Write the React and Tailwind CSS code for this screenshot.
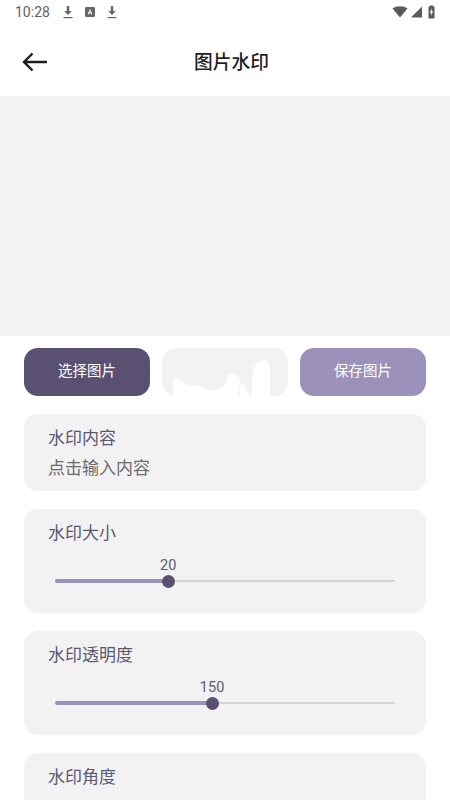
import React from "react";

function StatusBar() {
  return (
    <div className="h-[24px] shrink-0 flex items-center justify-between pl-[15px] pr-[15px] text-[#555]">
      <div className="flex items-center">
        <span className="text-[14px] leading-none w-[46px] font-['Roboto',sans-serif] text-[#5f5f5f]">10:28</span>
        <svg width="14" height="14" viewBox="0 0 14 14" className="text-[#666]">
          <path d="M5.8 1h2.4v5h2.6L7 10 3.2 6h2.6z" fill="currentColor" />
          <rect x="2.5" y="12" width="9" height="1.2" fill="currentColor" />
        </svg>
        <svg width="12" height="12" viewBox="0 0 12 12" className="ml-[9px]">
          <rect x="1" y="1" width="10" height="10" rx="1.2" fill="#666" />
          <path d="M3.6 8.6 6 2.8l2.4 5.8H7.3L6.9 7.5H5.1l-.4 1.1zM5.5 6.5h1L6 5z" fill="#fff" />
        </svg>
        <svg width="14" height="14" viewBox="0 0 14 14" className="ml-[9px] text-[#666]">
          <path d="M5.8 1h2.4v5h2.6L7 10 3.2 6h2.6z" fill="currentColor" />
          <rect x="2.5" y="12" width="9" height="1.2" fill="currentColor" />
        </svg>
      </div>
      <div className="flex items-center gap-[1px] mr-[-1px]">
        <svg width="16" height="12" viewBox="0 0 16 12"><path d="M0.5 2.5C4.5 -0.5 11.5 -0.5 15.5 2.5L8 11.5z" fill="#5a5a5a" /></svg>
        <svg width="13" height="12" viewBox="0 0 13 12" className="ml-[1px]"><path d="M12 0.5V11.5H1z" fill="#5a5a5a" /></svg>
        <svg width="9" height="14" viewBox="0 0 9 14" className="ml-[3px]">
          <path d="M3 0.5h3v1h1.5v12h-6v-12H3z" fill="#5a5a5a" />
          <path d="M5 3 2.8 7.8h1.5L3.8 11 6.2 6.4H4.7z" fill="#fff" />
        </svg>
      </div>
    </div>
  );
}

function Slider({ value, percent }) {
  return (
    <div className="relative h-[13px] mx-[7px]">
      <div className="absolute left-0 right-0 top-[5px] h-[2px] bg-[#d4d3d6]" />
      <div className="absolute left-0 top-[4px] h-[4px] rounded-full bg-[#9b91ba]" style={{ width: percent }} />
      <div className="absolute top-0 w-[13px] h-[13px] -ml-[6.5px] rounded-full bg-[#5a5172]" style={{ left: percent }} />
      <span className="absolute -top-[19px] -translate-x-1/2 text-[14.5px] leading-[20px] text-[#5f5b6b]" style={{ left: percent }}>{value}</span>
    </div>
  );
}

function SliderCard({ title, value, percent }) {
  return (
    <div className="bg-[#f2f2f3] rounded-[14px] h-[104px] px-[24px] pt-[12px] shrink-0">
      <div className="text-[17px] leading-[24px] text-[#5c5870]">{title}</div>
      <div className="mt-[30px]">
        <Slider value={value} percent={percent} />
      </div>
    </div>
  );
}

export default function App() {
  return (
    <div className="w-[450px] h-[800px] overflow-hidden bg-white flex flex-col font-['Roboto','Noto_Sans_CJK_SC',sans-serif]">
      <StatusBar />
      <div className="h-[72px] shrink-0 flex items-center relative justify-center">
        <svg width="28" height="22" viewBox="0 0 28 22" className="absolute left-[21px] top-[27px]" fill="none" stroke="#1c1c1c" strokeWidth="2.4">
          <path d="M26 11H3.5M11.5 2.5 3 11l8.5 8.5" />
        </svg>
        <span className="text-[18.75px] font-medium text-[#1f1f1f] mt-[6px] ml-[13px]">图片水印</span>
      </div>
      <div className="h-[240px] bg-[#f2f2f2] shrink-0" />
      <div className="flex gap-[12px] px-[24px] mt-[12px] shrink-0">
        <button className="w-[126px] h-[48px] rounded-[14px] bg-[#5a5172] text-white text-[14.5px]">选择图片</button>
        <div className="relative w-[126px] h-[48px] rounded-[14px] bg-[#f2f2f2] overflow-hidden">
          <svg width="126" height="48" viewBox="0 0 126 48" className="absolute inset-0" fill="#ffffff">
            <path d="M11 48V32l4-2 1 2 10 5h7l7 3 10 3 8-3 5-4 3-9 6-1 6 4 1 7-2 5-1 9z" />
            <path d="M78 48V38l4-2 3 6 3 6z" />
            <path d="M90 48V30l2-10 4-6 6-2 4 2 2 6v28z" />
          </svg>
        </div>
        <button className="w-[126px] h-[48px] rounded-[14px] bg-[#9b91ba] text-white text-[14.5px]">保存图片</button>
      </div>
      <div className="flex flex-col gap-[18px] px-[24px] mt-[18px]">
        <div className="bg-[#f2f2f3] rounded-[14px] h-[77px] px-[24px] pt-[12px] shrink-0">
          <div className="text-[17px] leading-[24px] text-[#5c5870]">水印内容</div>
          <div className="text-[17px] leading-[24px] mt-[6px] text-[#6b6b6b]">点击输入内容</div>
        </div>
        <SliderCard title="水印大小" value="20" percent="33.3%" />
        <SliderCard title="水印透明度" value="150" percent="46.2%" />
        <SliderCard title="水印角度" percent="0%" />
      </div>
    </div>
  );
}
